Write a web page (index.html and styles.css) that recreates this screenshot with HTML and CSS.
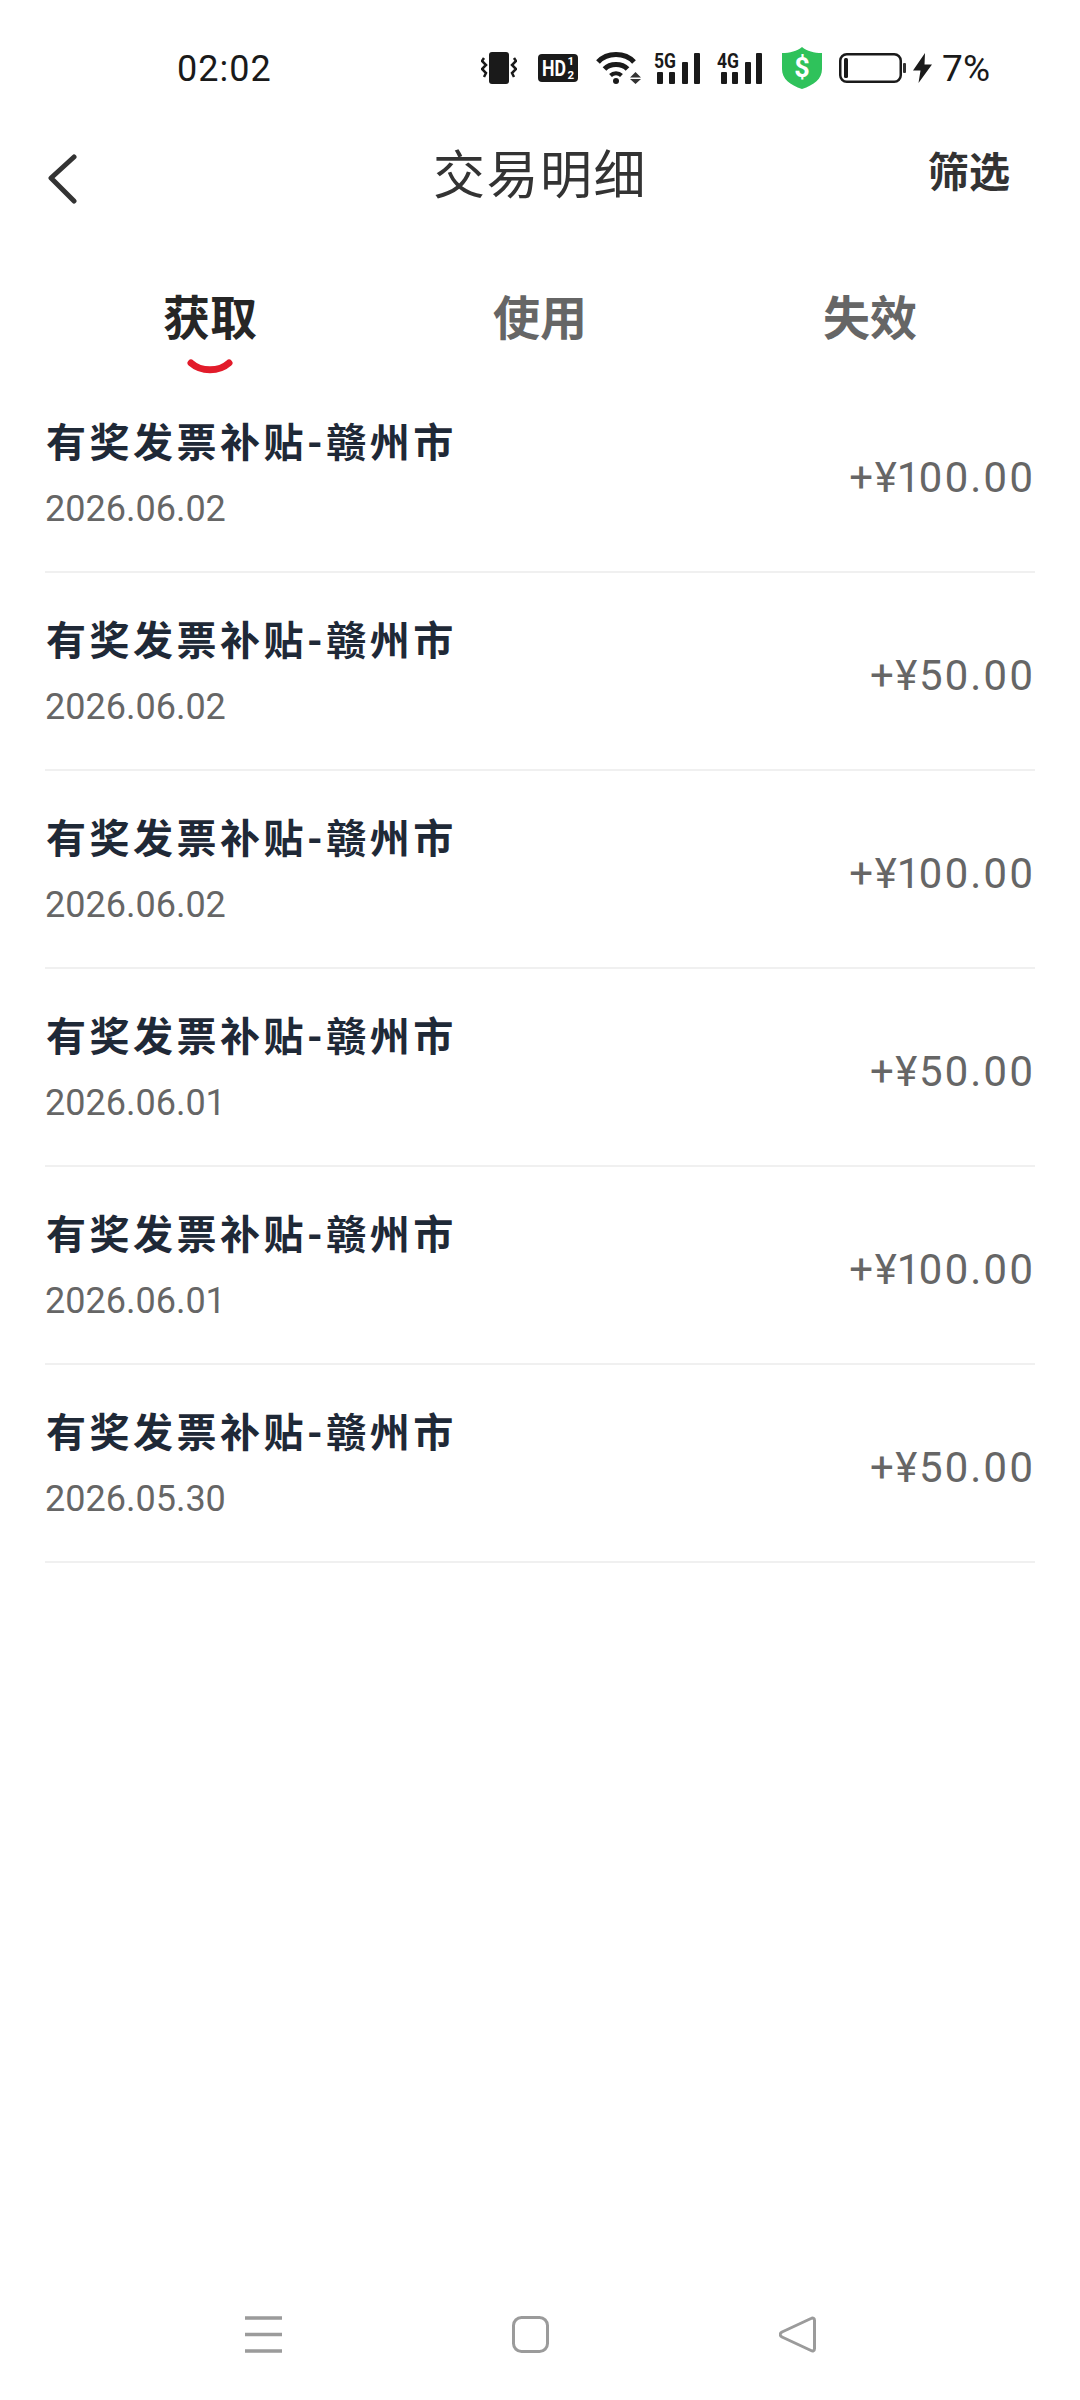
FILE: index.html
```html
<!DOCTYPE html>
<html>
  <head>
    <meta charset="utf-8">
    <title>交易明细</title>
    <link rel="stylesheet" href="styles.css">
  </head>
  <body>
    <div class="page">
      <div class="status-bar">
        <span class="time">02:02</span>
        <div class="status-icons">
          <svg width="36" height="33" viewBox="0 0 36 33">
            <rect x="8" y="1" width="20" height="32" rx="3" fill="#1a1a1a"/>
            <path d="M3 7l-2 3 4 4-4 4 4 4-2 4M33 7l2 3-4 4 4 4-4 4 2 4" fill="none" stroke="#1a1a1a" stroke-width="2.500"/>
          </svg>
          <svg class="ic-hd" width="40" height="28" viewBox="0 0 40 28">
            <rect width="40" height="28" rx="4" fill="#1a1a1a"/>
            <text x="4" y="22" class="hd-text" textLength="24" lengthAdjust="spacingAndGlyphs">HD</text>
            <text x="29.500" y="11" class="hd-small">1</text>
            <text x="29.500" y="25" class="hd-small">2</text>
          </svg>
          <svg class="ic-wifi" width="45" height="33" viewBox="0 0 45 33">
            <path d="M2 11C11 1 29 1 38 11M8.500 18C14 12 26 12 31.500 18" fill="none" stroke="#1a1a1a" stroke-width="5"/>
            <path d="M14.500 24.500c3-3 8-3 11 0" fill="none" stroke="#1a1a1a" stroke-width="4"/>
            <circle cx="20" cy="30" r="3" fill="#1a1a1a"/>
            <path d="M34 26.500l5.500-5.500 5.500 5.500zM34 28l5.500 5 5.500-5z" fill="#333"/>
          </svg>
          <svg class="ic-signal" width="46" height="36" viewBox="0 -4 46 36">
            <text x="0" y="16" class="net-text" textLength="22" lengthAdjust="spacingAndGlyphs">5G</text>
            <rect x="3" y="20" width="6" height="12" rx="1" fill="#1a1a1a"/>
            <rect x="15" y="20" width="6" height="12" rx="1" fill="#1a1a1a"/>
            <rect x="28" y="10" width="6" height="22" rx="1" fill="#1a1a1a"/>
            <rect x="40" y="1" width="6" height="31" rx="1" fill="#1a1a1a"/>
          </svg>
          <svg class="ic-signal second" width="46" height="36" viewBox="0 -4 46 36">
            <text x="0" y="16" class="net-text" textLength="22" lengthAdjust="spacingAndGlyphs">4G</text>
            <rect x="4" y="20" width="6" height="12" rx="1" fill="#1a1a1a"/>
            <rect x="15" y="20" width="6" height="12" rx="1" fill="#1a1a1a"/>
            <rect x="28" y="10" width="6" height="22" rx="1" fill="#1a1a1a"/>
            <rect x="39" y="1" width="6" height="31" rx="1" fill="#1a1a1a"/>
          </svg>
          <svg class="ic-shield" width="40" height="42" viewBox="0 0 40 42">
            <path d="M20 0c5 4 12 6 20 6v16c0 10-8 16-20 20C8 38 0 32 0 22V6c8 0 15-2 20-6z" fill="#2fc25b"/>
            <text x="20" y="30" class="shield-text">$</text>
          </svg>
          <svg class="ic-battery" width="67" height="30" viewBox="0 0 67 30">
            <rect x="1.250" y="1.250" width="60.500" height="27.500" rx="6.500" fill="none" stroke="#1a1a1a" stroke-width="2.500"/>
            <rect x="5" y="5" width="4" height="20" rx="1.500" fill="#1a1a1a"/>
            <rect x="64" y="10" width="3" height="10" rx="1" fill="#333"/>
          </svg>
          <svg class="ic-bolt" width="19" height="30" viewBox="0 0 19 30">
            <path d="M12 0L0 17.500h7.500L5.500 30 19 11.500h-7.500z" fill="#1a1a1a"/>
          </svg>
          <span class="battery-text">7%</span>
        </div>
      </div>

      <div class="nav-bar">
        <svg class="back" width="30" height="50" viewBox="0 0 30 50">
          <path d="M27 3L4 24l23 23" fill="none" stroke="#333" stroke-width="5" stroke-linecap="round" stroke-linejoin="round"/>
        </svg>
        <h1>交易明细</h1>
        <span class="filter">筛选</span>
      </div>

      <div class="tabs">
        <div class="tab active">
          <span>获取</span>
          <svg class="tab-mark" width="46" height="16" viewBox="0 0 46 16">
            <path d="M4 4c10 9 28 9 38 0" fill="none" stroke="#e21b2a" stroke-width="7" stroke-linecap="round"/>
          </svg>
        </div>
        <div class="tab"><span>使用</span></div>
        <div class="tab"><span>失效</span></div>
      </div>

      <div class="list">
        <div class="row">
          <div class="row-info"><div class="row-title">有奖发票补贴-赣州市</div><div class="row-date">2026.06.02</div></div>
          <div class="row-amount">+¥100.00</div>
        </div>
        <div class="row">
          <div class="row-info"><div class="row-title">有奖发票补贴-赣州市</div><div class="row-date">2026.06.02</div></div>
          <div class="row-amount">+¥50.00</div>
        </div>
        <div class="row">
          <div class="row-info"><div class="row-title">有奖发票补贴-赣州市</div><div class="row-date">2026.06.02</div></div>
          <div class="row-amount">+¥100.00</div>
        </div>
        <div class="row">
          <div class="row-info"><div class="row-title">有奖发票补贴-赣州市</div><div class="row-date">2026.06.01</div></div>
          <div class="row-amount">+¥50.00</div>
        </div>
        <div class="row">
          <div class="row-info"><div class="row-title">有奖发票补贴-赣州市</div><div class="row-date">2026.06.01</div></div>
          <div class="row-amount">+¥100.00</div>
        </div>
        <div class="row">
          <div class="row-info"><div class="row-title">有奖发票补贴-赣州市</div><div class="row-date">2026.05.30</div></div>
          <div class="row-amount">+¥50.00</div>
        </div>
      </div>

      <div class="bottom-nav">
        <svg width="37" height="37" viewBox="0 0 37 37">
          <path d="M0 2h37M0 18.500h37M0 35h37" stroke="#9b9b9b" stroke-width="3.500"/>
        </svg>
        <svg width="37" height="37" viewBox="0 0 37 37">
          <rect x="1.500" y="1.500" width="34" height="34" rx="8" fill="none" stroke="#9b9b9b" stroke-width="3"/>
        </svg>
        <svg width="37" height="37" viewBox="0 0 37 37">
          <path d="M32 2.500c2-1 3.500 0 3.500 2v28c0 2-1.500 3-3.500 2L3 21c-2.500-1.500-2.500-3.500 0-5z" fill="none" stroke="#9b9b9b" stroke-width="3" stroke-linejoin="round"/>
        </svg>
      </div>
    </div>
  </body>
</html>
```

FILE: styles.css
```css
html, body {
  margin: 0;
  padding: 0;
  background: #fff;
}
body {
  font-family: Roboto, "Noto Sans CJK SC", sans-serif;
  color: #333;
}
.page {
  display: flex;
  flex-direction: column;
  width: 1080px;
  height: 2400px;
  overflow: hidden;
}

/* status bar */
.status-bar {
  display: flex;
  align-items: center;
  height: 44px;
  padding: 47px 90px 39px 177px;
}
.time {
  font-size: 36px;
  color: #1a1a1a;
  letter-spacing: 1px;
}
.status-icons {
  display: flex;
  align-items: center;
  margin-top: -3px;
  margin-left: auto;
}
.status-icons svg {
  flex: none;
}
.ic-hd { margin-left: 21px; }
.ic-wifi { margin-left: 18px; }
.ic-signal { margin-left: 13px; margin-top: -4px; }
.ic-signal.second { margin-left: 17px; }
.ic-shield { margin-left: 19px; }
.ic-battery { margin-left: 17px; }
.ic-bolt { margin-left: 7px; }
.hd-text {
  font: 700 22px Roboto, sans-serif;
  fill: #fff;
}
.hd-small {
  font: 700 11.500px Roboto, sans-serif;
  fill: #fff;
}
.net-text {
  font: 700 21px Roboto, sans-serif;
  fill: #1a1a1a;
}
.shield-text {
  font: 700 27px Roboto, sans-serif;
  fill: #fff;
  text-anchor: middle;
}
.battery-text {
  margin-left: 10px;
  margin-top: 2px;
  font-size: 37px;
  color: #1a1a1a;
}

/* title row */
.nav-bar {
  display: grid;
  grid-template-columns: 1fr auto 1fr;
  align-items: center;
  height: 94px;
  padding-bottom: 6px;
}
.nav-bar h1 {
  margin: 0;
  font-size: 52px;
  line-height: 70px;
  font-weight: 400;
  letter-spacing: 1.500px;
  color: #333;
}
.back {
  margin-left: 47px;
  margin-top: 3px;
}
.filter {
  justify-self: end;
  margin-right: 70px;
  margin-top: -8px;
  font-size: 41px;
  line-height: 56px;
  font-weight: 700;
  color: #333;
}

/* tabs */
.tabs {
  display: flex;
  height: 145px;
  padding: 0 45px;
}
.tab {
  flex: 1;
  display: flex;
  flex-direction: column;
  align-items: center;
  padding-top: 58px;
  font-size: 47px;
  line-height: 62px;
  font-weight: 700;
  color: #666;
}
.tab.active {
  color: #262626;
}
.tab-mark {
  margin-top: 9px;
}

/* list */
.list {
  padding: 0 45px;
}
.row {
  display: flex;
  align-items: center;
  justify-content: space-between;
  height: 196px;
  border-bottom: 2px solid #f0f0f0;
}
.row-info {
  margin-top: 1px;
}
.row-title {
  margin-left: 1px;
  font-size: 40px;
  line-height: 56px;
  font-weight: 700;
  letter-spacing: 3.500px;
  color: #1f2937;
}
.row-date {
  margin-top: 15px;
  font-size: 36px;
  line-height: 44px;
  color: #666;
}
.row-amount {
  margin-top: 8px;
  font-size: 42px;
  letter-spacing: 1.600px;
  font-variant-numeric: proportional-nums;
  color: #666;
}

/* phone nav */
.bottom-nav {
  display: flex;
  justify-content: space-between;
  margin-top: auto;
  padding: 0 264px 47px 245px;
}
```
